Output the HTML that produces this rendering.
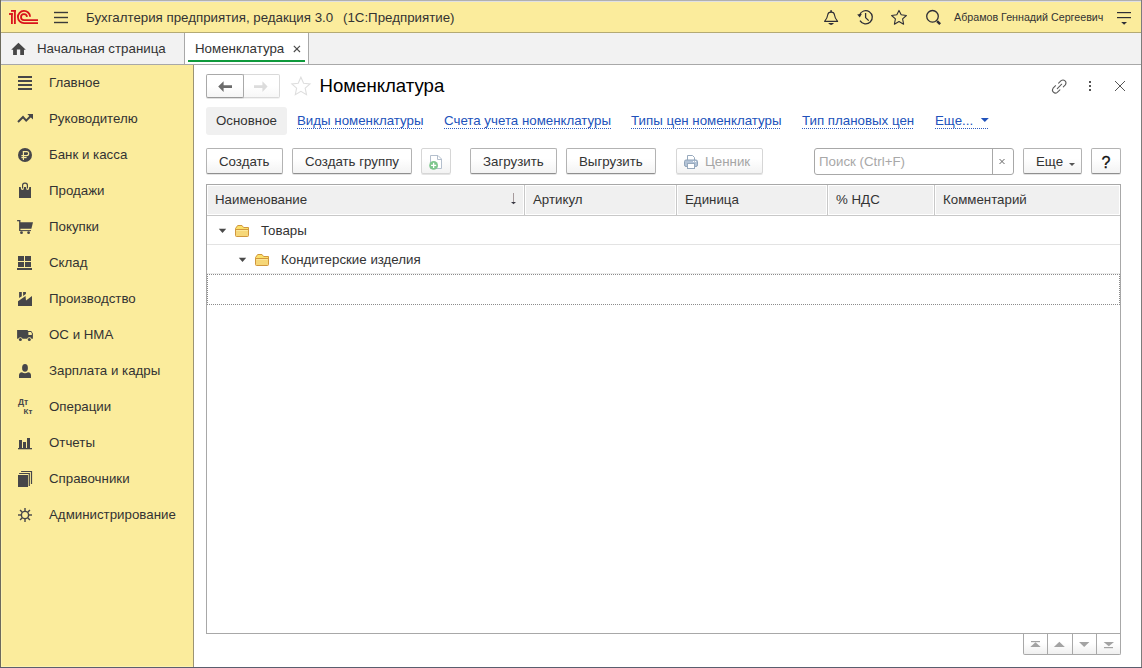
<!DOCTYPE html>
<html><head><meta charset="utf-8">
<style>
*{margin:0;padding:0;box-sizing:border-box}
html,body{width:1142px;height:668px;overflow:hidden;background:#fff}
body{position:relative;font-family:"Liberation Sans",sans-serif;font-size:13px;color:#333}
.a{position:absolute}
.t{position:absolute;white-space:pre;line-height:15px;font-size:13.3px}
svg{position:absolute;overflow:visible}
/* frame */
#top{left:0;top:0;width:1142px;height:33px;background:#fbec9c}
#tabs{left:0;top:33px;width:1142px;height:32px;background:#f2f2f2}
#side{left:0;top:65px;width:194px;height:603px;background:#fbec9c}
.nav .t{left:49px;color:#333}
.link{color:#2152bb;position:absolute;white-space:pre;line-height:15px;height:17px;font-size:13.3px;
 background-image:linear-gradient(to right,#2f5cc0 50%,transparent 50%);background-size:2px 1px;background-repeat:repeat-x;background-position:0 15px}
.btn{position:absolute;top:148px;height:26px;border:1px solid #b3b3b3;border-bottom-color:#8f8f8f;border-radius:2px;
 background:linear-gradient(#ffffff,#ffffff 40%,#f3f3f3);box-shadow:0 1px 0 rgba(0,0,0,0.10)}
.hd{position:absolute;top:185px;height:30px;background:#f0f0f0;border:1px solid #fff}
.sep{position:absolute;top:185px;width:1px;height:30px;background:#c8c8c8}
</style></head><body>

<!-- top bar -->
<div class="a" id="top"></div>
<div class="a" style="left:0;top:0;width:1142px;height:1px;background:#b0b0b0"></div>
<div class="a" style="left:0;top:1px;width:1142px;height:1px;background:#dfe0e4"></div>
<div class="a" style="left:0;top:32px;width:1142px;height:1px;background:#b4aa74"></div>

<!-- 1C logo -->
<svg style="left:0;top:0" width="40" height="30" viewBox="0 0 40 30">
 <g fill="#d9121b">
  <rect x="11" y="10" width="4.8" height="1.8"/>
  <rect x="13.95" y="10" width="1.85" height="14"/>
  <rect x="11" y="13.1" width="1.8" height="10.9"/>
  <rect x="9" y="13.1" width="3.8" height="1.8"/>
 </g>
 <g fill="none" stroke="#d9121b" stroke-width="1.8">
  <path d="M30.1 16.7 A6.1 6.1 0 1 0 24 23.1 H38"/>
  <path d="M27 16.8 A3 3 0 1 0 24 20.1 H38"/>
 </g>
</svg>
<!-- hamburger -->
<svg style="left:0;top:0" width="80" height="30">
 <g stroke="#3a3a3a" stroke-width="1.4">
  <line x1="54" y1="12.5" x2="68" y2="12.5"/>
  <line x1="54" y1="17.5" x2="68" y2="17.5"/>
  <line x1="54" y1="22.5" x2="68" y2="22.5"/>
 </g>
</svg>
<div class="t" style="left:86px;top:9.6px;color:#333">Бухгалтерия предприятия, редакция 3.0</div>
<div class="t" style="left:343px;top:9.6px;color:#333">(1С:Предприятие)</div>

<!-- top right icons -->
<div class="t" style="left:954px;top:10px;font-size:10.7px;color:#333">Абрамов Геннадий Сергеевич</div>

<!-- tabs bar -->
<div class="a" id="tabs"></div>
<div class="a" style="left:0;top:64px;width:1142px;height:1px;background:#a8a8a8"></div>
<div class="a" style="left:185px;top:33px;width:123px;height:31px;background:#fff"></div>
<div class="a" style="left:184px;top:33px;width:1px;height:31px;background:#a8a8a8"></div>
<div class="a" style="left:308px;top:33px;width:1px;height:31px;background:#a8a8a8"></div>
<div class="a" style="left:188px;top:60px;width:117px;height:2px;background:#0f9a3c"></div>
<div class="t" style="left:37px;top:40.5px">Начальная страница</div>
<div class="t" style="left:195px;top:40.5px">Номенклатура</div>

<!-- sidebar -->
<div class="a" id="side"></div>
<div class="a" style="left:193px;top:65px;width:1px;height:603px;background:#9c9474"></div>
<div class="nav">
 <div class="t" style="top:75px">Главное</div>
 <div class="t" style="top:111px">Руководителю</div>
 <div class="t" style="top:147px">Банк и касса</div>
 <div class="t" style="top:183px">Продажи</div>
 <div class="t" style="top:219px">Покупки</div>
 <div class="t" style="top:255px">Склад</div>
 <div class="t" style="top:291px">Производство</div>
 <div class="t" style="top:327px">ОС и НМА</div>
 <div class="t" style="top:363px">Зарплата и кадры</div>
 <div class="t" style="top:399px">Операции</div>
 <div class="t" style="top:435px">Отчеты</div>
 <div class="t" style="top:471px">Справочники</div>
 <div class="t" style="top:507px">Администрирование</div>
</div>

<!-- content -->
<div class="t" style="left:319.5px;top:76.3px;font-size:18.6px;line-height:20px;color:#000">Номенклатура</div>

<div class="a" style="left:206px;top:107px;width:81px;height:28px;background:#f0f0f0;border-radius:3px"></div>
<div class="t" style="left:216px;top:113px">Основное</div>
<div class="link" style="left:297px;top:113px">Виды номенклатуры</div>
<div class="link" style="left:444px;top:113px">Счета учета номенклатуры</div>
<div class="link" style="left:631px;top:113px">Типы цен номенклатуры</div>
<div class="link" style="left:802px;top:113px">Тип плановых цен</div>
<div class="link" style="left:935px;top:113px;width:54px">Еще...</div>

<div class="btn" style="left:206px;width:77px"></div>
<div class="t" style="left:219px;top:154px">Создать</div>
<div class="btn" style="left:292px;width:120px"></div>
<div class="t" style="left:305px;top:154px">Создать группу</div>
<div class="btn" style="left:421px;width:30px;border-color:#d6d6d6"></div>
<div class="btn" style="left:470px;width:87px"></div>
<div class="t" style="left:483px;top:154px">Загрузить</div>
<div class="btn" style="left:566px;width:90px"></div>
<div class="t" style="left:579px;top:154px">Выгрузить</div>
<div class="btn" style="left:676px;width:87px;border-color:#d6d6d6"></div>
<div class="t" style="left:705px;top:154px;color:#a5a5a5">Ценник</div>

<div class="a" style="left:814px;top:148px;width:200px;height:27px;border:1px solid #a8a8a8;border-radius:3px;background:#fff"></div>
<div class="a" style="left:992px;top:149px;width:1px;height:25px;background:#a8a8a8"></div>
<div class="t" style="left:819px;top:154px;color:#a8a8a8">Поиск (Ctrl+F)</div>
<div class="btn" style="left:1023px;width:59px"></div>
<div class="t" style="left:1036px;top:154px">Еще</div>
<div class="btn" style="left:1091px;width:30px"></div>

<!-- table -->
<div class="a" style="left:206px;top:184px;width:915px;height:450px;border:1px solid #a8a8a8;background:#fff"></div>
<div class="hd" style="left:207px;width:317px"></div>
<div class="hd" style="left:525px;width:151px"></div>
<div class="hd" style="left:677px;width:150px"></div>
<div class="hd" style="left:828px;width:106px"></div>
<div class="hd" style="left:935px;width:185px"></div>
<div class="sep" style="left:524px"></div>
<div class="sep" style="left:676px"></div>
<div class="sep" style="left:827px"></div>
<div class="sep" style="left:934px"></div>
<div class="a" style="left:207px;top:215px;width:913px;height:1px;background:#c8c8c8"></div>
<div class="t" style="left:215px;top:191.5px">Наименование</div>
<div class="t" style="left:533px;top:191.5px">Артикул</div>
<div class="t" style="left:685px;top:191.5px">Единица</div>
<div class="t" style="left:836px;top:191.5px">% НДС</div>
<div class="t" style="left:943px;top:191.5px">Комментарий</div>

<div class="a" style="left:207px;top:244px;width:913px;height:1px;background:#e3e3e3"></div>
<div class="t" style="left:261px;top:223px">Товары</div>
<div class="t" style="left:281px;top:252px">Кондитерские изделия</div>


<!-- TOP RIGHT ICONS -->
<svg style="left:0;top:0" width="1142" height="33">
 <g fill="none" stroke="#2e2e36" stroke-width="1.3" stroke-linejoin="round">
  <path stroke-width="1.15" d="M824.6 21.4 H837.6 C836 19.6 834.8 17.6 834.5 15 C834.3 13 833.2 12.1 831.1 12.1 C829 12.1 827.9 13 827.7 15 C827.4 17.6 826.2 19.6 824.6 21.4 Z"/>
  <path d="M859.5 15.0 A6.6 6.6 0 1 1 860 20.6"/>
  <path d="M865.6 13 V17.6 L868.7 20.6"/>
  <path stroke-width="1.1" d="M899 10.4 L901.2 14.8 L906.4 15.5 L902.6 18.9 L903.6 24.2 L899 21.6 L894.4 24.2 L895.4 18.9 L891.6 15.5 L896.8 14.8 Z"/>
  <circle cx="932.5" cy="16.3" r="5.8"/>
 </g>
 <g fill="#2e2e36">
  <rect x="830.3" y="10.2" width="1.6" height="1.8"/>
  <path d="M828.2 23.1 H834 Q833 24.9 831.1 24.9 Q829.2 24.9 828.2 23.1 Z"/>
  <path d="M857.2 14.6 L861.9 13.8 L859.8 17.4 Z"/>
  <path d="M936.2 21.9 L937.9 20.2 L941 23.3 L939.3 25 Z"/>
  <rect x="1117" y="12" width="14" height="1.2"/>
  <rect x="1117" y="17" width="14" height="1.2"/>
  <path d="M1121.2 22 H1127 L1124.1 24.8 Z"/>
 </g>
</svg>

<!-- TAB ICONS -->
<svg style="left:0;top:0" width="320" height="65">
 <path fill="#474747" d="M11.2 49.8 L18.45 42.7 L25.8 49.8 H24 V54.9 H20.2 V49.5 H16.9 V54.9 H13.1 V49.8 Z"/>
 <g stroke="#4a4a4a" stroke-width="1.1"><line x1="293.8" y1="45.8" x2="300" y2="52"/><line x1="300" y1="45.8" x2="293.8" y2="52"/></g>
</svg>

<!-- SIDEBAR ICONS -->
<svg style="left:0;top:0" width="40" height="530">
 <g fill="#464649">
  <rect x="18" y="76" width="14" height="2"/><rect x="18" y="80" width="14" height="2"/><rect x="18" y="84" width="14" height="2"/><rect x="18" y="88" width="14" height="2"/>
  <path d="M27.3 114 H33 V119.6 Z"/>
  <circle cx="25" cy="155" r="7"/>
  <path d="M19 187 H20.8 V188 A1.6 2.1 0 0 0 24 188 V187 H26 V188 A1.6 2.1 0 0 0 29.2 188 V187 H31 V198 H19 Z"/>
  <path d="M20 222.2 H33 L31.4 228.8 H20 Z"/>
  <rect x="17.1" y="220" width="3" height="1.3"/><rect x="19.1" y="220" width="1.3" height="11"/>
  <rect x="20" y="230.1" width="11" height="1"/>
  <circle cx="21.5" cy="232.7" r="1.4"/><circle cx="28.6" cy="232.7" r="1.4"/>
  <rect x="18" y="256" width="6" height="5"/><rect x="25" y="256" width="6" height="5"/><rect x="18" y="262" width="6" height="5"/><rect x="25" y="262" width="6" height="5"/><rect x="17" y="268" width="15" height="2"/>
  <path d="M18 306 V301.2 L25.5 296 L26 300.5 L32 296 V306 Z"/>
  <path d="M19.1 292 H21.8 V296.2 L19.1 298 Z"/><path d="M23.1 292 H25.9 V294 L23.1 295.9 Z"/>
  <path d="M17.1 330 H27.8 V331 H31.2 L32.9 333.4 V338.8 H31.5 A2.3 2.3 0 0 0 27.2 338.8 H22.6 A2.3 2.3 0 0 0 18.2 338.8 H17.1 Z"/>
  <circle cx="20.4" cy="339.4" r="1.5"/><circle cx="29.3" cy="339.4" r="1.5"/>
  <ellipse cx="25" cy="367.9" rx="2.9" ry="3.8"/>
  <path d="M19 378 V375 Q19.2 372.4 22 372.2 Q25 374.2 28 372.2 Q30.8 372.4 31 375 V378 Z"/>
  <rect x="19" y="440" width="3" height="9"/><rect x="23" y="442" width="3" height="7"/><rect x="27" y="438" width="3" height="11"/><rect x="18" y="448" width="14" height="1.3"/>
  <rect x="18" y="475" width="10" height="12"/>
  <circle cx="25" cy="515" r="4.3"/>
 </g>
 <g fill="none" stroke="#464649" stroke-width="2" stroke-linejoin="miter">
  <path d="M18 122 L23 117 L26.2 120.6 L31 115.8"/>
 </g>
 <g fill="none" stroke="#fbec9c" stroke-width="1.15">
  <path d="M23.4 151 V160"/><path d="M22.9 151.6 H26.7 A2 2 0 0 1 26.7 155.6 H21.4"/><path d="M21.4 157.6 H26.6"/>
 </g>
 <g fill="none" stroke="#464649" stroke-width="1.2">
  <path d="M22.6 188.6 V185.2 A2.1 2.1 0 0 1 24.7 183.1 H25.3 A2.1 2.1 0 0 1 27.4 185.2 V188.6"/>
  <path d="M19.1 473.5 H29.3 V486"/><path d="M21.1 471.5 H31.5 V484"/>
 </g>
 <g stroke="#464649" stroke-width="1.4">
  <line x1="25" y1="508" x2="25" y2="522"/><line x1="18" y1="515" x2="32" y2="515"/>
  <line x1="20.05" y1="510.05" x2="29.95" y2="519.95"/><line x1="29.95" y1="510.05" x2="20.05" y2="519.95"/>
 </g>
 <g fill="#fbec9c"><path d="M28.4 332 H31 L31.8 333.3 V334.9 H28.4 Z"/><circle cx="25" cy="515" r="2.9"/></g>
</svg>
<div class="a" style="left:18px;top:397.3px;font-size:8.5px;line-height:10px;font-weight:bold;color:#464649">Дт</div>
<div class="a" style="left:23.5px;top:407px;font-size:8px;line-height:9px;font-weight:bold;color:#464649">Кт</div>


<!-- BACK/FWD -->
<div class="a" style="left:243px;top:74px;width:37px;height:24px;border:1px solid #d9d9d9;border-left:none;border-radius:0 2px 2px 0;background:linear-gradient(#fff,#fff 50%,#f7f7f7);box-shadow:0 1px 0 rgba(0,0,0,0.05)"></div>
<div class="a" style="left:206px;top:74px;width:38px;height:24px;border:1px solid #a9a9a9;border-bottom-color:#999;border-radius:2px;background:linear-gradient(#fff,#fff 50%,#f5f5f5);box-shadow:0 1px 0 rgba(0,0,0,0.12)"></div>
<svg style="left:0;top:0" width="1142" height="300">
 <path fill="#6b6b6b" d="M218.2 86.6 L223.6 81.2 V85.2 H232 V88 H223.6 V92 Z"/>
 <path fill="#dcdcdc" d="M267.6 86.6 L262.4 81.2 V85.2 H254 V88 H262.4 V92 Z"/>
 <path fill="none" stroke="#dedede" stroke-width="1.1" d="M300.9 77.2 L303.6 83.2 L310 83.9 L305.2 88.2 L306.5 94.7 L300.9 91.4 L295.3 94.7 L296.6 88.2 L291.8 83.9 L298.2 83.2 Z"/>
 <g fill="none" stroke="#5a5a5a" stroke-width="1.05" stroke-linecap="round">
  <path d="M1058.6 83.2 L1061.1 80.7 A3 3 0 0 1 1065.3 84.9 L1063.3 86.9"/>
  <path d="M1055.6 85.7 L1053.1 88.2 A3 3 0 0 0 1057.3 92.4 L1059.9 89.8"/>
  <path d="M1057.3 88.6 L1061.7 84.2"/>
 </g>
 <g fill="#555"><rect x="1089" y="81" width="2" height="2"/><rect x="1089" y="85" width="2" height="2"/><rect x="1089" y="89" width="2" height="2"/></g>
 <g stroke="#555" stroke-width="1"><line x1="1115" y1="81" x2="1125" y2="91"/><line x1="1125" y1="81" x2="1115" y2="91"/></g>
 <!-- Еще... triangle -->
 <path fill="#2152bb" d="M980.8 118 H988.8 L984.8 122 Z"/>
 <!-- doc + -->
 <path fill="#fff" stroke="#b4bfcd" stroke-width="1" d="M430.5 155.5 H438 L441.5 159 V168.5 H430.5 Z"/>
 <path fill="none" stroke="#b4bfcd" stroke-width="1" d="M437.5 155.5 V159.5 H441.5"/>
 <circle cx="433.6" cy="165.4" r="4.4" fill="#7dc68c"/>
 <g stroke="#fff" stroke-width="1.3"><line x1="431" y1="165.4" x2="436.2" y2="165.4"/><line x1="433.6" y1="162.8" x2="433.6" y2="168"/></g>
 <!-- printer -->
 <path fill="#fff" stroke="#97a9bd" stroke-width="1" d="M687.5 155.5 H692.5 L694.5 157.5 V161 H687.5 Z"/>
 <rect x="684.5" y="160" width="13" height="6.5" rx="1.6" fill="#b3c3d6" stroke="#8fa3b9" stroke-width="1"/>
 <rect x="687.5" y="163.5" width="7" height="5" fill="#fff" stroke="#97a9bd" stroke-width="1"/>
 <g fill="#fff"><rect x="693" y="161" width="1" height="1"/><rect x="695" y="161" width="1" height="1"/></g>
 <!-- search x -->
 <g stroke="#666" stroke-width="1"><line x1="999.5" y1="159" x2="1004.5" y2="164"/><line x1="1004.5" y1="159" x2="999.5" y2="164"/></g>
 <!-- Еще caret -->
 <path fill="#555" d="M1069 163 H1075 L1072 166 Z"/>
 <!-- header arrow -->
 <g stroke="#a69a9c" stroke-width="1"><line x1="513.5" y1="193" x2="513.5" y2="203"/></g>
 <path fill="#3a3a44" d="M511 202 H516 L513.5 204.3 Z"/>
 <!-- tree -->
 <path fill="#4a4a4a" d="M218.8 228.8 H226.2 L222.5 233 Z"/>
 <path fill="#4a4a4a" d="M238.8 257.8 H246.2 L242.5 262 Z"/>
</svg>
<svg style="left:0;top:0" width="300" height="300">
 <g transform="translate(235 225)">
   <path fill="#fbe069" stroke="#d1973d" stroke-width="1" stroke-linejoin="round" d="M0.5 3.5 L2.7 0.5 H7 L8.6 2.5 H13.5 V5 H0.5 Z"/>
   <path fill="#f6d778" stroke="#d1973d" stroke-width="1" stroke-linejoin="round" d="M0.5 4.5 H13.5 V10.5 Q13.5 11.5 12.5 11.5 H1.5 Q0.5 11.5 0.5 10.5 Z"/>
   <rect x="1.2" y="5" width="11.6" height="1" fill="#fce79a"/>
  </g>
 <g transform="translate(255 254)">
   <path fill="#fbe069" stroke="#d1973d" stroke-width="1" stroke-linejoin="round" d="M0.5 3.5 L2.7 0.5 H7 L8.6 2.5 H13.5 V5 H0.5 Z"/>
   <path fill="#f6d778" stroke="#d1973d" stroke-width="1" stroke-linejoin="round" d="M0.5 4.5 H13.5 V10.5 Q13.5 11.5 12.5 11.5 H1.5 Q0.5 11.5 0.5 10.5 Z"/>
   <rect x="1.2" y="5" width="11.6" height="1" fill="#fce79a"/>
  </g>
</svg>
<!-- dotted focus row -->
<div class="a" style="left:207px;top:273px;width:913px;height:1px;background:#ececec"></div>
<div class="a" style="left:207px;top:274px;width:913px;height:31px;
 background-image:linear-gradient(to right,#8c8c8c 50%,transparent 50%),linear-gradient(to right,#8c8c8c 50%,transparent 50%),linear-gradient(#8c8c8c 50%,transparent 50%),linear-gradient(#8c8c8c 50%,transparent 50%);
 background-size:2px 1px,2px 1px,1px 2px,1px 2px;background-repeat:repeat-x,repeat-x,repeat-y,repeat-y;background-position:0 0,0 30px,0 0,912px 0"></div>
<!-- bottom nav -->
<div class="a" style="left:1023px;top:634px;width:98px;height:21px;border:1px solid #a8a8a8;border-top:none;border-radius:0 0 2px 2px;background:linear-gradient(#fff,#fff 45%,#efefef)"></div>
<div class="a" style="left:1047px;top:634px;width:1px;height:20px;background:#a8a8a8"></div>
<div class="a" style="left:1072px;top:634px;width:1px;height:20px;background:#a8a8a8"></div>
<div class="a" style="left:1096px;top:634px;width:1px;height:20px;background:#a8a8a8"></div>
<svg style="left:0;top:0" width="1142" height="668">
 <g fill="#a3a3a3">
  <rect x="1031" y="641" width="9" height="1.2"/><path d="M1030.3 647 L1035.5 642.2 L1040.7 647 Z"/>
  <path d="M1053.9 647 L1059.35 641.7 L1064.8 647 Z"/>
  <path d="M1079 642 H1089.4 L1084.2 647.1 Z"/>
  <path d="M1103.6 642 H1114 L1108.8 646.2 Z"/><rect x="1104" y="647" width="9" height="1.2"/>
 </g>
</svg>
<div class="t" style="left:1101.5px;top:155px;font-size:16px;line-height:16px;-webkit-text-stroke:0.3px #111;color:#111">?</div>

<div class="a" style="left:1px;top:2px;width:1px;height:30px;background:#fdf3b0"></div>
<div class="a" style="left:1px;top:65px;width:1px;height:602px;background:#fdf3b0"></div>
<div class="a" style="left:1px;top:666px;width:192px;height:1px;background:#fdf3b0"></div>
<!-- window borders -->
<div class="a" style="left:0;top:0;width:1px;height:668px;background:#6c6a5c"></div>
<div class="a" style="left:1141px;top:0;width:1px;height:668px;background:#7c7c7c"></div>
<div class="a" style="left:0;top:667px;width:1142px;height:1px;background:#5a5e6e"></div>
</body></html>
